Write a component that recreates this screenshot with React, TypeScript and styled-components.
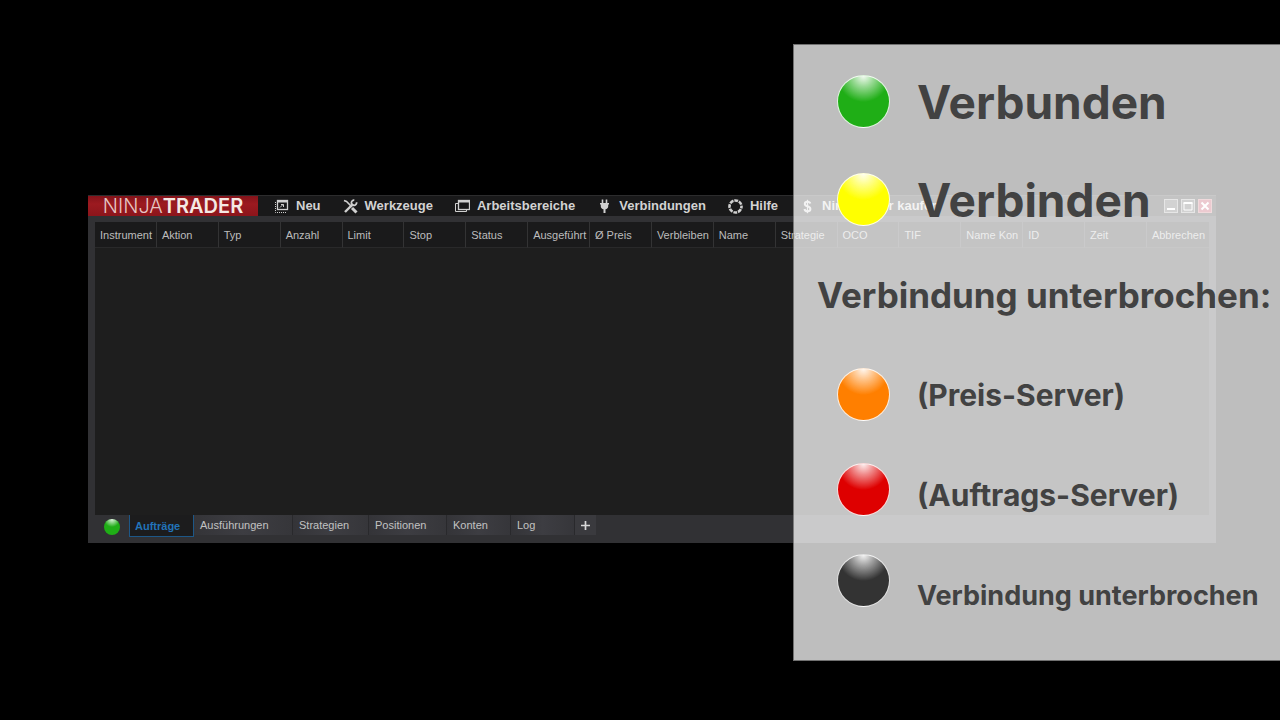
import React from 'react';
import styled, { createGlobalStyle } from 'styled-components';

const GlobalStyle = createGlobalStyle`
  *, *::before, *::after { box-sizing: border-box; }
  html { background: #000; }
  body { margin: 0; font-family: 'Liberation Sans', Arial, sans-serif; }
  button { margin: 0; padding: 0; border: 0; background: none; font: inherit; color: inherit; }
`;

const Stage = styled.main`
  position: relative;
  min-height: 100vh;
  padding: 195px 64px 0 88px;
  background: #000;
  overflow: hidden;
`;

const Window = styled.section`
  display: flex;
  flex-direction: column;
  background: #313134;
`;

const TitleBar = styled.header`
  display: flex;
  align-items: center;
  height: 21px;
  background: #19191a;
  border-top: 1px solid #2c2c2d;
`;

const Logo = styled.h1`
  display: flex;
  align-items: center;
  justify-content: center;
  width: 170px;
  height: 20px;
  margin: 0;
  background: linear-gradient(#84131a, #9c1a20 40%, #8c151b);
  color: #e6c6c4;
  font: 300 20px/20px Inter, sans-serif;
`;

const LogoStrong = styled.span`
  color: #f4e9e4;
  font-weight: 600;
`;

const Menu = styled.nav`
  display: flex;
  flex: 1;
  gap: 22px;
  padding-left: 16px;
`;

const MenuButton = styled.button`
  display: flex;
  align-items: center;
  gap: 7px;
  color: #d2d2d2;
  font-size: 13px;
  font-weight: 700;
  line-height: 20px;
  white-space: nowrap;
`;

const MenuIcon = styled.svg`
  width: 15px;
  height: 15px;
  fill: none;
  stroke: #d0d0d0;
`;

const Controls = styled.div`
  display: flex;
  gap: 3px;
  padding-right: 4px;
`;

const ControlButton = styled.button<{ $close?: boolean }>`
  width: 14px;
  height: 14px;
  border: 1px solid ${p => (p.$close ? '#c87078' : '#a0a0a0')};
  background: ${p => (p.$close ? '#b8304a' : '#505052')};
`;

const ControlIcon = styled.svg`
  display: block;
  width: 12px;
  height: 12px;
  fill: none;
  stroke: #fff;
  stroke-width: 2;
`;

const TablePane = styled.div`
  min-height: 293px;
  margin: 6px 7px 0 7px;
  background: #1e1e1e;
`;

const OrdersTable = styled.table`
  width: 100%;
  table-layout: fixed;
  border-collapse: separate;
  border-spacing: 0;
`;

const HeadCell = styled.th`
  height: 26px;
  padding: 0 0 0 5px;
  border-right: 1px solid #333334;
  border-bottom: 1px solid #29292a;
  background: #1a1a1b;
  color: #bdbdbd;
  font-size: 11px;
  font-weight: 400;
  line-height: 14px;
  text-align: left;
  white-space: nowrap;
  overflow: hidden;
  &:last-child { border-right: 0; }
`;

const Footer = styled.footer`
  display: flex;
  align-items: flex-start;
  height: 28px;
  padding-left: 16px;
`;

const Tabs = styled.div`
  display: flex;
  align-items: flex-start;
  margin-left: 9px;
`;

const Tab = styled.button<{ $width: number; $active?: boolean }>`
  width: ${p => p.$width}px;
  height: ${p => (p.$active ? 22 : 20)}px;
  padding-left: ${p => (p.$active ? 5 : 6)}px;
  border: 0 solid #29292c;
  border-right-width: 1px;
  background: ${p => (p.$active ? '#1c1c1d' : 'linear-gradient(90deg, #343438, #3d3d42 50%, #36363a)')};
  ${p => p.$active && 'border: 1px solid #1d5787; border-top: 0;'}
  color: ${p => (p.$active ? '#2273b8' : '#c2c2c2')};
  font-size: 11px;
  font-weight: ${p => (p.$active ? 700 : 400)};
  line-height: 20px;
  text-align: left;
  white-space: nowrap;
`;

const AddTab = styled.button`
  display: flex;
  align-items: center;
  justify-content: center;
  width: 21px;
  height: 20px;
  background: #3a3a3e;
`;

const Legend = styled.aside`
  position: absolute;
  top: 44px;
  right: 0;
  width: 487px;
  height: 617px;
  padding: 30px 0 0 23px;
  border: 1px solid rgba(150, 150, 150, 0.75);
  border-right: 0;
  background: rgba(253, 253, 253, 0.75);
  background-clip: padding-box;
  color: #424242;
  font-family: Inter, 'Open Sans', sans-serif;
  font-weight: 700;
  white-space: nowrap;
`;

const LegendList = styled.ul`
  margin: 0;
  padding: 0 0 0 20px;
  list-style: none;
`;

const LegendItem = styled.li<{ $size: number; $line: number; $gap?: number; $end?: boolean }>`
  display: flex;
  align-items: ${p => (p.$end ? 'flex-end' : 'center')};
  gap: 27px;
  margin-top: ${p => p.$gap ?? 0}px;
  font-size: ${p => p.$size}px;
  line-height: ${p => p.$line}px;
`;

const LegendHeading = styled.h2`
  margin: 46px 0 50px;
  font-size: 35px;
  font-weight: 700;
  line-height: 46px;
`;

const Light = styled.span<{ $color: string }>`
  flex: none;
  width: 53px;
  height: 53px;
  border: 1px solid rgba(255, 255, 255, 0.85);
  border-radius: 50%;
  background:
    radial-gradient(ellipse 26px 26px at 50% 0, rgba(255, 255, 255, 0.95), rgba(255, 255, 255, 0.55) 40%, rgba(255, 255, 255, 0) 100%),
    ${p => p.$color};
`;

const SmallLight = styled.span`
  width: 16px;
  height: 16px;
  margin-top: 4px;
  border-radius: 50%;
  background:
    radial-gradient(ellipse 8px 8px at 50% 0, rgba(255, 255, 255, 0.9), rgba(255, 255, 255, 0)),
    #1fae16;
`;

const columns = [
  'Instrument', 'Aktion', 'Typ', 'Anzahl', 'Limit', 'Stop', 'Status', 'Ausgeführt', 'Ø Preis',
  'Verbleiben', 'Name', 'Strategie', 'OCO', 'TIF', 'Name Kon', 'ID', 'Zeit', 'Abbrechen',
];

const tabs = [
  { label: 'Aufträge', width: 65, active: true },
  { label: 'Ausführungen', width: 99 },
  { label: 'Strategien', width: 76 },
  { label: 'Positionen', width: 78 },
  { label: 'Konten', width: 64 },
  { label: 'Log', width: 64 },
];

const menu = [
  {
    label: 'Neu',
    icon: (
      <>
        <rect x="3.5" y="1.5" width="10" height="9" strokeWidth="1.300" />
        <path d="M3 2.500h11" strokeWidth="2" />
        <path d="M6 8.500l3-3M7 5.500h2.500V8" />
        <path d="M1.500 3v10.500H12" strokeDasharray="1 1" />
      </>
    ),
  },
  {
    label: 'Werkzeuge',
    icon: (
      <>
        <path d="M2 13L10 5" strokeWidth="2.400" />
        <path d="M13.500 3.200a2.600 2.600 0 1 1-2.200-2" strokeWidth="1.800" />
        <path d="M1 1.500l2.500 1L9 8" strokeWidth="1.500" />
        <path d="M9 9l4.500 4.500" strokeWidth="3" />
      </>
    ),
  },
  {
    label: 'Arbeitsbereiche',
    icon: (
      <>
        <rect x="3.5" y="1.500" width="11" height="9" strokeWidth="1.300" />
        <path d="M3 2.500h12" strokeWidth="2" />
        <path d="M3 4.500H.5v8h11V11" />
      </>
    ),
  },
  {
    label: 'Verbindungen',
    icon: (
      <>
        <path d="M5.500 0.500V5M9.500 0.500V5" strokeWidth="1.600" />
        <path d="M3 4h9v1.500h-.8v2c0 1.500-1.200 2.500-2.700 2.800V14h-2v-3.700C5 10 3.800 9 3.800 7.500v-2H3z" fill="#d0d0d0" stroke="none" />
      </>
    ),
  },
  {
    label: 'Hilfe',
    icon: <circle cx="7.5" cy="7.500" r="6" strokeWidth="2.600" strokeDasharray="3.800 0.912" strokeDashoffset="1.900" />,
  },
  {
    label: 'NinjaTrader kaufen',
    icon: (
      <>
        <path d="M10.300 4.600C10 3.400 9 2.800 7.500 2.800S4.800 3.600 4.800 4.900C4.800 8 10.400 6.600 10.400 9.900c0 1.400-1.200 2.300-2.900 2.300S4.700 11.500 4.500 10" strokeWidth="2" />
        <path d="M7.500 .8v13.400" strokeWidth="1.300" />
      </>
    ),
  },
];

export default function App() {
  return (
    <Stage>
      <GlobalStyle />
      <Window>
        <TitleBar>
          <Logo>NINJA<LogoStrong>TRADER</LogoStrong></Logo>
          <Menu>
            {menu.map(m => (
              <MenuButton key={m.label} type="button">
                <MenuIcon viewBox="0 0 15 15" aria-hidden="true">{m.icon}</MenuIcon>
                {m.label}
              </MenuButton>
            ))}
          </Menu>
          <Controls>
            <ControlButton type="button" aria-label="Minimieren">
              <ControlIcon viewBox="0 0 12 12"><path d="M2 9h8" /></ControlIcon>
            </ControlButton>
            <ControlButton type="button" aria-label="Maximieren">
              <ControlIcon viewBox="0 0 12 12">
                <path d="M1.500 3h9" />
                <path d="M2 3v7h8V3" strokeWidth="1" />
              </ControlIcon>
            </ControlButton>
            <ControlButton type="button" aria-label="Schließen" $close>
              <ControlIcon viewBox="0 0 12 12"><path d="M2.500 2.500l7 7M9.500 2.500l-7 7" /></ControlIcon>
            </ControlButton>
          </Controls>
        </TitleBar>
        <TablePane>
          <OrdersTable>
            <thead>
              <tr>{columns.map(c => <HeadCell key={c} scope="col">{c}</HeadCell>)}</tr>
            </thead>
          </OrdersTable>
        </TablePane>
        <Footer>
          <SmallLight />
          <Tabs>
            {tabs.map(t => (
              <Tab key={t.label} type="button" $width={t.width} $active={t.active}>{t.label}</Tab>
            ))}
            <AddTab type="button" aria-label="Tab hinzufügen">
              <svg width="9" height="9" viewBox="0 0 9 9" stroke="#d8d8d8" strokeWidth="1.700"><path d="M0 4.500h9M4.500 0v9" /></svg>
            </AddTab>
          </Tabs>
        </Footer>
      </Window>
      <Legend>
        <LegendList>
          <LegendItem $size={46} $line={52}><Light $color="#1fae16" />Verbunden</LegendItem>
          <LegendItem $size={46} $line={52} $gap={45}><Light $color="#ffff00" />Verbinden</LegendItem>
        </LegendList>
        <LegendHeading>Verbindung unterbrochen:</LegendHeading>
        <LegendList>
          <LegendItem $size={30} $line={52}><Light $color="#ff7f00" />(Preis-Server)</LegendItem>
          <LegendItem $size={30} $line={42} $gap={42} $end><Light $color="#de0000" />(Auftrags-Server)</LegendItem>
          <LegendItem $size={27} $line={22} $gap={38} $end><Light $color="#333333" />Verbindung unterbrochen</LegendItem>
        </LegendList>
      </Legend>
    </Stage>
  );
}
